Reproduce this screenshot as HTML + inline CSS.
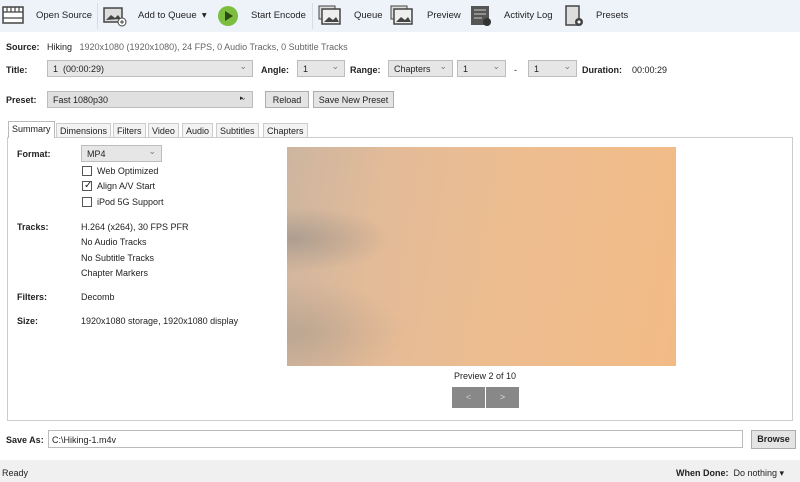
<!DOCTYPE html>
<html><head><style>
*{box-sizing:border-box;margin:0;padding:0}
body{width:800px;height:482px;overflow:hidden;background:#fff;font-family:"Liberation Sans",sans-serif;font-size:9px;color:#222;position:relative}
.a{position:absolute;white-space:nowrap}
b{font-weight:bold}
.tb{position:absolute;left:0;top:0;width:800px;height:32px;background:#eef3fa}
.combo{position:absolute;height:17px;background:#e6e6e6;border:1px solid #bdbdbd;padding:3px 5px;font-size:9px}
.combo:after{content:"⌄";position:absolute;right:5px;top:0px;color:#777;font-size:9px}
.btn{position:absolute;height:17px;background:#e4e4e4;border:1px solid #adadad;text-align:center;padding-top:3px}
.tab{position:absolute;top:123px;height:14px;border:1px solid #ccc;border-bottom:none;background:#f3f3f3;padding:2px 3px 0;font-size:9px}
.cb{position:absolute;width:10px;height:10px;border:1px solid #555;background:#fff}
</style></head><body>
<div class="tb"></div>
<svg class="a" style="left:2px;top:6px" width="22" height="18"><rect x="1" y="1" width="20" height="16" fill="#fff" stroke="#444" stroke-width="1.5"/><path d="M1 6h20M1 12h20M5 1v5M9 1v5M13 1v5M17 1v5" stroke="#444" stroke-width="1.2"/></svg>
<div class="a" style="left:36px;top:10px;font-size:9.5px">Open Source</div>
<div class="a" style="left:97px;top:3px;width:1px;height:26px;background:#d8dde4"></div>
<svg class="a" style="left:103px;top:5px" width="24" height="22"><rect x="1" y="3" width="18" height="14" fill="#ddd" stroke="#444" stroke-width="1.5"/><path d="M3 15l5-5 4 3 3-3 3 4z" fill="#444"/><circle cx="19" cy="17" r="4" fill="#fff" stroke="#444"/><path d="M19 15v4M17 17h4" stroke="#444"/></svg>
<div class="a" style="left:138px;top:10px;font-size:9.5px">Add to Queue &nbsp;▾</div>
<svg class="a" style="left:217px;top:5px" width="22" height="22"><circle cx="11" cy="11" r="10" fill="#7cbe3f"/><path d="M8 6l8 5-8 5z" fill="#2a4a10"/></svg>
<div class="a" style="left:251px;top:10px;font-size:9.5px">Start Encode</div>
<div class="a" style="left:312px;top:3px;width:1px;height:26px;background:#d8dde4"></div>
<svg class="a" style="left:318px;top:5px" width="24" height="22"><rect x="1" y="1" width="16" height="13" fill="#ddd" stroke="#444"/><rect x="4" y="4" width="18" height="15" fill="#eee" stroke="#444" stroke-width="1.5"/><path d="M6 17l5-5 4 3 3-3 3 5z" fill="#444"/></svg>
<div class="a" style="left:354px;top:10px;font-size:9.5px">Queue</div>
<svg class="a" style="left:390px;top:5px" width="24" height="22"><rect x="1" y="1" width="16" height="13" fill="#ddd" stroke="#444"/><rect x="4" y="4" width="18" height="15" fill="#eee" stroke="#444" stroke-width="1.5"/><path d="M6 17l5-5 4 3 3-3 3 5z" fill="#444"/></svg>
<div class="a" style="left:427px;top:10px;font-size:9.5px">Preview</div>
<svg class="a" style="left:470px;top:5px" width="22" height="22"><rect x="1" y="1" width="18" height="19" fill="#555"/><path d="M4 5h12M4 9h12M4 13h8" stroke="#ccc"/><circle cx="17" cy="17" r="4" fill="#333"/></svg>
<div class="a" style="left:504px;top:10px;font-size:9.5px">Activity Log</div>
<svg class="a" style="left:564px;top:5px" width="22" height="22"><rect x="2" y="1" width="13" height="19" fill="#ddd" stroke="#444" stroke-width="1.5"/><circle cx="15" cy="17" r="4" fill="#444"/><circle cx="15" cy="17" r="1.5" fill="#fff"/></svg>
<div class="a" style="left:596px;top:10px;font-size:9.5px">Presets</div>

<div class="a" style="left:6px;top:42px"><b>Source:</b></div>
<div class="a" style="left:47px;top:42px">Hiking &nbsp;&nbsp;<span style="color:#666">1920x1080 (1920x1080), 24 FPS, 0 Audio Tracks, 0 Subtitle Tracks</span></div>
<div class="a" style="left:6px;top:65px"><b>Title:</b></div>
<div class="combo" style="left:47px;top:60px;width:206px">1 &nbsp;(00:00:29)</div>
<div class="a" style="left:261px;top:65px"><b>Angle:</b></div>
<div class="combo" style="left:297px;top:60px;width:48px">1</div>
<div class="a" style="left:350px;top:65px"><b>Range:</b></div>
<div class="combo" style="left:388px;top:60px;width:65px">Chapters</div>
<div class="combo" style="left:457px;top:60px;width:49px">1</div>
<div class="a" style="left:514px;top:65px">-</div>
<div class="combo" style="left:528px;top:60px;width:49px">1</div>
<div class="a" style="left:582px;top:65px"><b>Duration:</b></div>
<div class="a" style="left:632px;top:65px">00:00:29</div>
<div class="a" style="left:6px;top:95px"><b>Preset:</b></div>
<div class="combo" style="left:47px;top:91px;width:206px;background:#e0e0e0">Fast 1080p30</div>
<div class="a" style="left:240px;top:94px;font-size:7px">▸</div>
<div class="btn" style="left:265px;top:91px;width:44px">Reload</div>
<div class="btn" style="left:313px;top:91px;width:81px">Save New Preset</div>

<div class="a" style="left:7px;top:137px;width:786px;height:284px;border:1px solid #ccc"></div>
<div class="tab" style="left:8px;top:121px;height:17px;background:#fff;border-color:#bbb">Summary</div>
<div class="tab" style="left:56px">Dimensions</div>
<div class="tab" style="left:113px">Filters</div>
<div class="tab" style="left:148px">Video</div>
<div class="tab" style="left:182px">Audio</div>
<div class="tab" style="left:216px">Subtitles</div>
<div class="tab" style="left:263px">Chapters</div>

<div class="a" style="left:17px;top:149px"><b>Format:</b></div>
<div class="combo" style="left:81px;top:145px;width:81px">MP4</div>
<div class="cb" style="left:82px;top:166px"></div><div class="a" style="left:97px;top:166px">Web Optimized</div>
<div class="cb" style="left:82px;top:181px"></div><div class="a" style="left:84px;top:180px;font-size:10px">✓</div><div class="a" style="left:97px;top:181px">Align A/V Start</div>
<div class="cb" style="left:82px;top:197px"></div><div class="a" style="left:97px;top:197px">iPod 5G Support</div>
<div class="a" style="left:17px;top:222px"><b>Tracks:</b></div>
<div class="a" style="left:81px;top:222px">H.264 (x264), 30 FPS PFR</div>
<div class="a" style="left:81px;top:237px">No Audio Tracks</div>
<div class="a" style="left:81px;top:253px">No Subtitle Tracks</div>
<div class="a" style="left:81px;top:268px">Chapter Markers</div>
<div class="a" style="left:17px;top:292px"><b>Filters:</b></div>
<div class="a" style="left:81px;top:292px">Decomb</div>
<div class="a" style="left:17px;top:316px"><b>Size:</b></div>
<div class="a" style="left:81px;top:316px">1920x1080 storage, 1920x1080 display</div>

<div class="a" style="left:287px;top:147px;width:389px;height:219px;background:linear-gradient(100deg,#cdb5a0 0%,#e3bb98 25%,#edbd90 55%,#f2bb86 100%)"></div>
<div class="a" style="left:287px;top:147px;width:389px;height:219px;background:radial-gradient(ellipse at 2% 42%,rgba(140,135,130,.5),transparent 18%),radial-gradient(ellipse at 3% 85%,rgba(150,140,130,.4),transparent 20%)"></div>
<div class="a" style="left:454px;top:371px">Preview 2 of 10</div>
<div class="a" style="left:452px;top:387px;width:33px;height:21px;background:#888;color:#ccc;text-align:center;padding-top:5px">&lt;</div>
<div class="a" style="left:486px;top:387px;width:33px;height:21px;background:#888;color:#ddd;text-align:center;padding-top:5px">&gt;</div>

<div class="a" style="left:6px;top:435px"><b>Save As:</b></div>
<div class="a" style="left:48px;top:430px;width:695px;height:18px;border:1px solid #bbb;padding:4px 3px">C:\Hiking-1.m4v</div>
<div class="btn" style="left:751px;top:430px;width:45px;height:19px;font-weight:bold">Browse</div>

<div class="a" style="left:0;top:460px;width:800px;height:22px;background:#f0f0f0"></div>
<div class="a" style="left:2px;top:468px">Ready</div>
<div class="a" style="left:676px;top:468px"><b>When Done:</b>&nbsp; Do nothing ▾</div>
</body></html>
